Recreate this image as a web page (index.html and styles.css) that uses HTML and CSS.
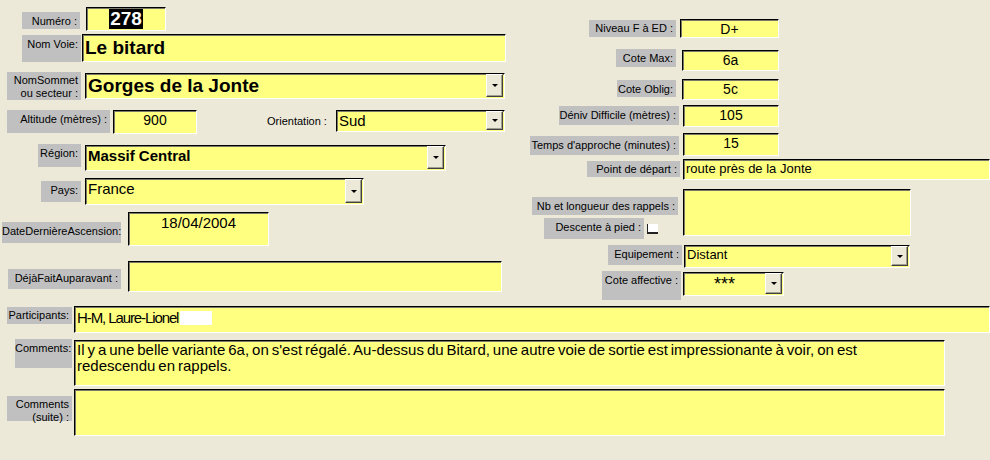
FILE: index.html
```html
<!DOCTYPE html>
<html lang="fr">
<head>
<meta charset="utf-8">
<title>Voie</title>
<link rel="stylesheet" href="styles.css">
</head>
<body>
<div class="form">
  <div class="top">
    <div class="col-left">
      <div class="row r-num">
        <div class="lbl l-num">Numéro :</div>
        <div class="fld f-num"><span class="txt c"><span class="hl">278</span></span></div>
      </div>
      <div class="row r-voie">
        <div class="lbl l-voie">Nom Voie:</div>
        <div class="fld f-voie"><span class="txt big">Le bitard</span></div>
      </div>
      <div class="row r-sommet">
        <div class="lbl l-sommet">NomSommet<br>ou secteur :</div>
        <div class="fld f-sommet"><span class="txt big">Gorges de la Jonte</span><span class="btn"><i></i></span></div>
      </div>
      <div class="row r-alt">
        <div class="lbl l-alt">Altitude (mètres) :</div>
        <div class="fld f-alt"><span class="txt c v14">900</span></div>
        <div class="t-orient">Orientation :</div>
        <div class="fld f-orient"><span class="txt v15">Sud</span><span class="btn"><i></i></span></div>
      </div>
      <div class="row r-region">
        <div class="lbl l-region">Région:</div>
        <div class="fld f-region"><span class="txt b15">Massif Central</span><span class="btn"><i></i></span></div>
      </div>
      <div class="row r-pays">
        <div class="lbl l-pays">Pays:</div>
        <div class="fld f-pays"><span class="txt v15">France</span><span class="btn"><i></i></span></div>
      </div>
      <div class="row r-date">
        <div class="lbl l-date">DateDernièreAscension:</div>
        <div class="fld f-date"><span class="txt c v15">18/04/2004</span></div>
      </div>
      <div class="row r-deja">
        <div class="lbl l-deja">DéjàFaitAuparavant :</div>
        <div class="fld f-deja"></div>
      </div>
    </div>
    <div class="col-right">
      <div class="row r-niv">
        <div class="lbl l-niv">Niveau F à ED :</div>
        <div class="fld f-niv"><span class="txt c v14">D+</span></div>
      </div>
      <div class="row r-max">
        <div class="lbl l-max">Cote Max:</div>
        <div class="fld f-max"><span class="txt c v14">6a</span></div>
      </div>
      <div class="row r-obl">
        <div class="lbl l-obl">Cote Oblig:</div>
        <div class="fld f-obl"><span class="txt c v14">5c</span></div>
      </div>
      <div class="row r-den">
        <div class="lbl l-den">Déniv Difficile (mètres) :</div>
        <div class="fld f-den"><span class="txt c v14">105</span></div>
      </div>
      <div class="row r-tmp">
        <div class="lbl l-tmp">Temps d'approche (minutes) :</div>
        <div class="fld f-tmp"><span class="txt c v14">15</span></div>
      </div>
      <div class="row r-pt">
        <div class="lbl l-pt">Point de départ :</div>
        <div class="fld f-pt"><span class="txt v13">route près de la Jonte</span></div>
      </div>
      <div class="row r-nb">
        <div class="nb-labels">
          <div class="lbl l-nb">Nb et longueur des rappels :</div>
          <div class="desc">
            <div class="lbl l-desc">Descente à pied :</div>
            <div class="chk"></div>
          </div>
        </div>
        <div class="fld f-nb"></div>
      </div>
      <div class="row r-eq">
        <div class="lbl l-eq">Equipement :</div>
        <div class="fld f-eq"><span class="txt v13">Distant</span><span class="btn"><i></i></span></div>
      </div>
      <div class="row r-cote">
        <div class="lbl l-cote">Cote affective :</div>
        <div class="fld f-cote"><span class="txt c stars">***</span><span class="btn"><i></i></span></div>
      </div>
    </div>
  </div>
  <div class="bottom">
    <div class="row r-part">
      <div class="lbl l-part">Participants:</div>
      <div class="fld f-part"><span class="txt narrow">H-M, Laure-Lionel<span class="sel"></span></span></div>
    </div>
    <div class="row r-com">
      <div class="lbl l-com">Comments:</div>
      <div class="fld f-com"><span class="txt multi">Il y a une belle variante 6a, on s'est régalé. Au-dessus du Bitard, une autre voie de sortie est impressionante à voir, on est redescendu en rappels.</span></div>
    </div>
    <div class="row r-suite">
      <div class="lbl l-suite">Comments<br>(suite) :</div>
      <div class="fld f-suite"></div>
    </div>
  </div>
</div>
</body>
</html>
```
FILE: styles.css
```css
html, body {
  margin: 0;
  padding: 0;
  background: #ece9d8;
}
body {
  width: 990px;
  height: 460px;
  overflow: hidden;
  font-family: "Liberation Sans", Arial, sans-serif;
  color: #000;
}
.form {
  width: 990px;
  height: 460px;
}
.top {
  display: flex;
  height: 300px;
}
.col-left {
  width: 515px;
  flex: none;
}
.col-right {
  flex: 1;
}
.row {
  display: flex;
  align-items: flex-start;
}
.lbl {
  flex: none;
  box-sizing: border-box;
  background: #c0c0c0;
  font-size: 11px;
  line-height: 13px;
  text-align: right;
  padding: 3px 3px 0 0;
  white-space: nowrap;
}
.fld {
  flex: none;
  box-sizing: border-box;
  display: flex;
  align-items: flex-start;
  background: #ffff80;
  border-top: 1px solid #000;
  border-left: 1px solid #000;
  border-right: 1px solid #fff;
  border-bottom: 1px solid #fff;
  box-shadow: inset 1px 1px 0 #7a7a6a;
  overflow: hidden;
}
.txt {
  flex: 1;
  white-space: nowrap;
  padding-left: 2px;
}
.c { text-align: center; padding-left: 0; }
.big { font-size: 19px; font-weight: bold; line-height: 26px; }
.b15 { font-size: 15px; font-weight: bold; line-height: 17px; padding-top: 1px; }
.v15 { font-size: 15px; line-height: 17px; padding-top: 1px; }
.v14 { font-size: 14px; line-height: 18px; }
.v13 { font-size: 13px; line-height: 16px; padding-top: 1px; }
.narrow {
  font-size: 15px;
  letter-spacing: -1.1px;
  line-height: 18px;
  padding-top: 2px;
}
.multi {
  white-space: normal;
  font-size: 15px;
  word-spacing: -1.2px;
  line-height: 16px;
  padding: 1px 20px 0 2px;
}
.stars { font-size: 18px; line-height: 22px; }
.hl {
  display: inline-block;
  background: #000;
  color: #fff;
  font-size: 19px;
  font-weight: bold;
  line-height: 20px;
  padding: 0 1px;
  margin-top: 1px;
  letter-spacing: 0;
}
.sel {
  display: inline-block;
  width: 32px;
  height: 14px;
  background: #fff;
  vertical-align: -2px;
  margin-left: 2px;
}
.btn {
  flex: none;
  align-self: stretch;
  box-sizing: border-box;
  width: 17px;
  margin: 0 1px 1px 0;
  background: #ece9d8;
  border-top: 1px solid #fff;
  border-left: 1px solid #fff;
  border-right: 1px solid #404040;
  border-bottom: 1px solid #404040;
  box-shadow: inset -1px -1px 0 #a0a090;
  display: flex;
  align-items: center;
  justify-content: center;
}
.btn i {
  display: block;
  width: 0;
  height: 0;
  border-left: 3px solid transparent;
  border-right: 3px solid transparent;
  border-top: 3px solid #000;
}
.t-orient {
  flex: none;
  font-size: 11px;
  line-height: 13px;
  margin: 5px 0 0 70px;
  width: 62px;
  white-space: nowrap;
}

/* left column */
.r-num { margin-top: 7px; }
.l-num { margin: 5px 0 0 22px; width: 58px; height: 17px; }
.f-num { margin-left: 6px; width: 80px; height: 24px; }
.r-voie { margin-top: 3px; }
.l-voie { margin: 1px 0 0 22px; width: 59px; height: 27px; }
.f-voie { margin-left: 1px; width: 424px; height: 28px; }
.r-sommet { margin-top: 10px; }
.l-sommet { margin-left: 7px; width: 74px; height: 28px; padding-top: 2px; }
.f-sommet { margin: 1px 0 0 4px; width: 420px; height: 26px; }
.f-sommet .big { line-height: 24px; }
.r-alt { margin-top: 10px; }
.l-alt { margin-left: 7px; width: 103px; height: 23px; }
.f-alt { margin-left: 3px; width: 84px; height: 24px; }
.f-orient { margin-left: 7px; width: 169px; height: 22px; }
.r-region { margin-top: 10px; }
.l-region { margin-left: 38px; width: 43px; height: 23px; }
.f-region { margin: 1px 0 0 4px; width: 361px; height: 26px; }
.r-pays { margin-top: 7px; }
.l-pays { margin: 3px 0 0 41px; width: 40px; height: 21px; }
.f-pays { margin-left: 4px; width: 279px; height: 27px; }
.r-date { margin-top: 7px; }
.l-date { margin: 10px 0 0 2px; width: 119px; height: 21px; }
.f-date { margin-left: 7px; width: 141px; height: 34px; }
.r-deja { margin-top: 15px; }
.l-deja { margin: 8px 0 0 8px; width: 113px; height: 20px; }
.f-deja { margin-left: 7px; width: 374px; height: 31px; }

/* right column */
.r-niv { margin-top: 19px; }
.l-niv { margin: 1px 0 0 74px; width: 87px; height: 17px; padding-top: 2px; }
.f-niv { margin-left: 4px; width: 99px; height: 19px; }
.r-max { margin-top: 11px; }
.l-max { margin-left: 101px; width: 60px; height: 18px; }
.f-max { margin: 1px 0 0 6px; width: 97px; height: 21px; }
.r-obl { margin-top: 8px; }
.l-obl { margin: 1px 0 0 102px; width: 59px; height: 17px; }
.f-obl { margin-left: 6px; width: 97px; height: 21px; }
.r-den { margin-top: 5px; }
.l-den { margin: 1px 0 0 44px; width: 120px; height: 19px; }
.f-den { margin-left: 4px; width: 96px; height: 22px; }
.r-tmp { margin-top: 6px; }
.l-tmp { margin: 3px 0 0 15px; width: 149px; height: 19px; }
.f-tmp { margin-left: 4px; width: 96px; height: 23px; }
.r-pt { margin-top: 3px; }
.l-pt { margin: 2px 0 0 72px; width: 93px; height: 16px; padding-top: 2px; }
.f-pt { margin-left: 3px; width: 307px; height: 21px; }
.r-nb { margin-top: 9px; }
.nb-labels { flex: none; width: 168px; }
.l-nb { margin: 8px 0 0 17px; width: 146px; height: 18px; }
.desc { display: flex; align-items: flex-start; margin-top: 3px; }
.l-desc { margin-left: 29px; width: 100px; height: 21px; }
.chk {
  flex: none;
  box-sizing: border-box;
  margin: 6px 0 0 3px;
  width: 11px;
  height: 10px;
  background: #fff;
  border-left: 1px solid #222;
  border-bottom: 2px solid #222;
}
.f-nb { width: 228px; height: 47px; }
.r-eq { margin-top: 6px; }
.l-eq { margin-left: 93px; width: 74px; height: 20px; }
.f-eq { margin-left: 2px; width: 226px; height: 23px; }
.r-cote { margin-top: 3px; }
.l-cote { margin-left: 87px; width: 79px; height: 29px; }
.f-cote { margin: 1px 0 0 2px; width: 101px; height: 24px; }

/* bottom */
.r-part { margin-top: 6px; }
.l-part { margin: 1px 0 0 7px; width: 65px; height: 17px; padding-top: 2px; }
.f-part { margin-left: 2px; width: 916px; height: 27px; }
.r-com { margin-top: 6px; }
.l-com { margin-left: 15px; width: 57px; height: 29px; }
.f-com { margin: 1px 0 0 2px; width: 871px; height: 46px; }
.r-suite { margin-top: 3px; }
.l-suite { margin: 7px 0 0 7px; width: 65px; height: 25px; padding-top: 2px; }
.f-suite { margin-left: 2px; width: 871px; height: 47px; }
```
